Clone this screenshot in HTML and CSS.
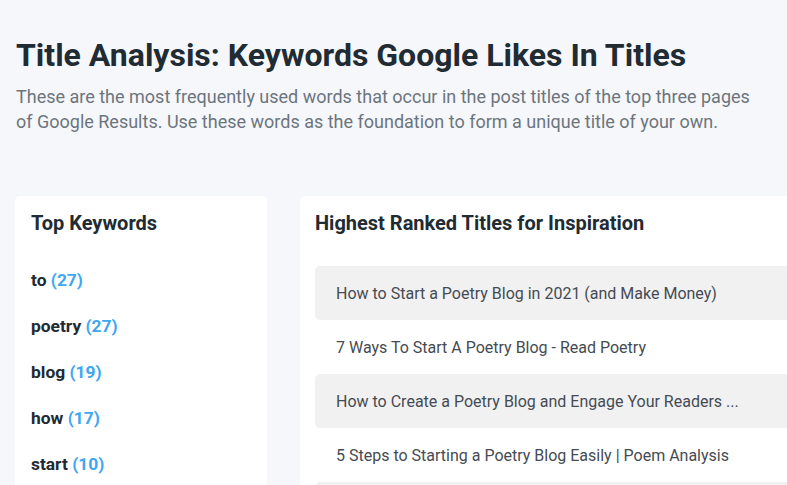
FILE: index.html
```html
<!DOCTYPE html>
<html>
<head>
<meta charset="utf-8">
<link rel="stylesheet" href="styles.css">
</head>
<body>
<main class="page">
  <header class="intro">
    <h1 class="title">Title Analysis: Keywords Google Likes In Titles</h1>
    <p class="lead">These are the most frequently used words that occur in the post titles of the top three pages of Google Results. Use these words as the foundation to form a unique title of your own.</p>
  </header>
  <section class="panels">
    <div class="card card-keywords">
      <h2 class="card-title">Top Keywords</h2>
      <ul class="keywords">
        <li class="kw">to <span class="count">(27)</span></li>
        <li class="kw">poetry <span class="count">(27)</span></li>
        <li class="kw">blog <span class="count">(19)</span></li>
        <li class="kw">how <span class="count">(17)</span></li>
        <li class="kw">start <span class="count">(10)</span></li>
      </ul>
    </div>
    <div class="card card-titles">
      <h2 class="card-title">Highest Ranked Titles for Inspiration</h2>
      <ul class="titles">
        <li class="row">How to Start a Poetry Blog in 2021 (and Make Money)</li>
        <li class="row">7 Ways To Start A Poetry Blog - Read Poetry</li>
        <li class="row">How to Create a Poetry Blog and Engage Your Readers ...</li>
        <li class="row">5 Steps to Starting a Poetry Blog Easily | Poem Analysis</li>
        <li class="row">How to Start a Poetry Blog</li>
      </ul>
    </div>
  </section>
</main>
</body>
</html>
```

FILE: styles.css
```css
html, body {
  margin: 0;
  padding: 0;
  background: #f6f7fb;
  overflow: hidden;
}
body {
  font-family: Roboto, "Noto Sans", sans-serif;
  color: #212b33;
}
.page {
  padding: 36px 0 0 16px;
  width: 1100px;
}
.title {
  margin: 0;
  font-size: 32px;
  font-weight: 700;
  line-height: 38px;
  color: #212b33;
}
.lead {
  margin: 10px 0 0 0;
  width: 740px;
  font-size: 18px;
  line-height: 25px;
  color: #6c757d;
}
.panels {
  display: flex;
  gap: 33px;
  margin-top: 62px;
  margin-left: -1px;
}
.card {
  background: #fff;
  border-radius: 5px;
}
.card-keywords {
  width: 252px;
  padding: 15px 16px;
  box-sizing: border-box;
}
.card-titles {
  width: 700px;
  padding: 15px 15px;
}
.card-title {
  margin: 0;
  font-size: 20px;
  font-weight: 700;
  line-height: 24px;
  color: #212b33;
}
.keywords {
  list-style: none;
  margin: 33px 0 0 0;
  padding: 0;
}
.kw {
  font-size: 17.4px;
  font-weight: 700;
  line-height: 24px;
  margin-bottom: 22px;
  color: #212b33;
}
.count {
  color: #3ea7f3;
}
.titles {
  list-style: none;
  margin: 31px 0 0 0;
  padding: 0;
}
.row {
  height: 54px;
  display: flex;
  align-items: center;
  padding-left: 21px;
  font-size: 16px;
  color: #454b52;
  border-radius: 5px;
}
.row:nth-child(odd) {
  background: #f1f1f2;
}
```
